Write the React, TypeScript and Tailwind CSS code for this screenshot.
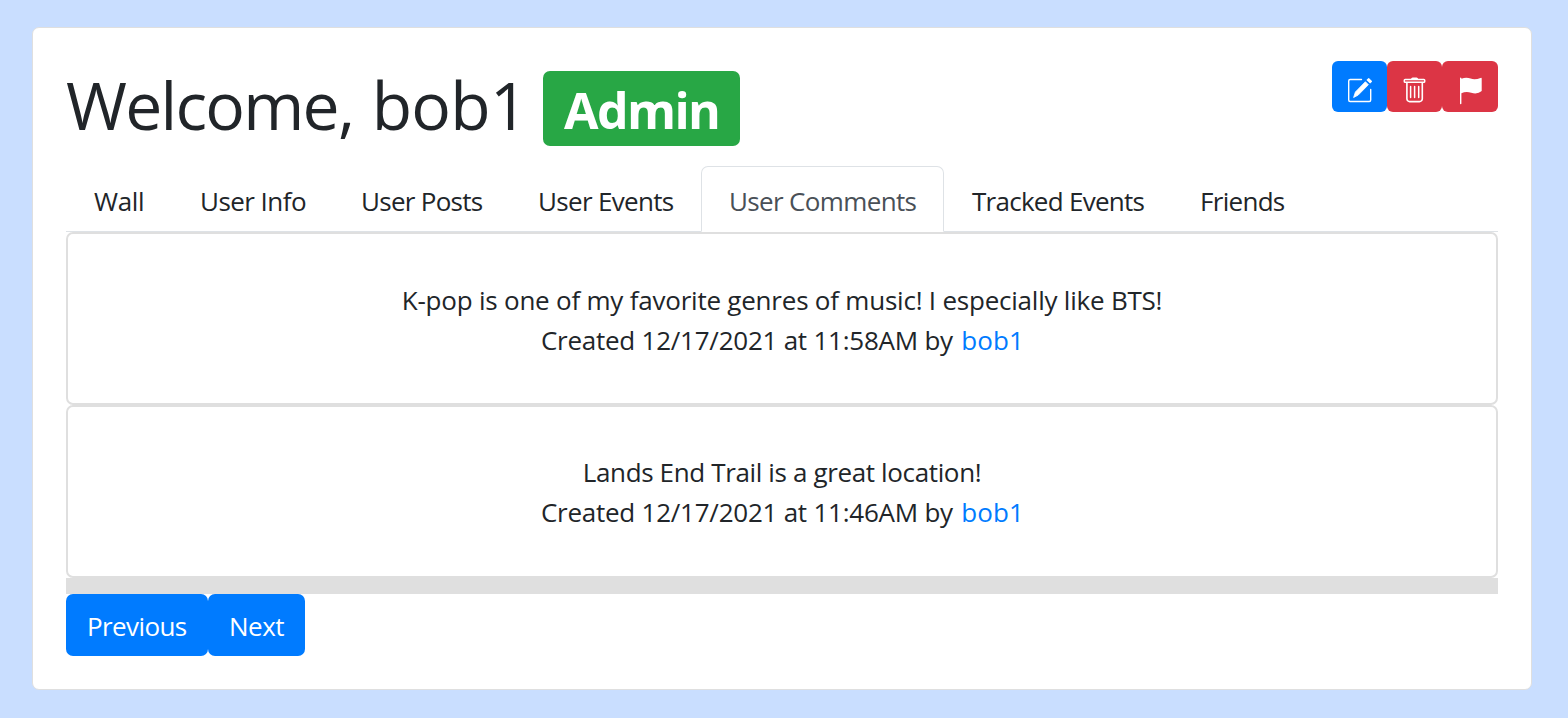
import type { ReactNode } from "react";

const tabs = [
  { label: "Wall", cls: "w-[106px] pl-[28px] tracking-[-0.3px]" },
  { label: "User Info", cls: "w-[161px] pl-[28px] tracking-[-0.55px]" },
  { label: "User Posts", cls: "w-[177px] pl-[28px] tracking-[-0.72px]" },
  { label: "User Events", cls: "w-[191px] pl-[28px] tracking-[-0.68px]" },
  { label: "User Comments", cls: "w-[243px] pl-[27px] tracking-[-0.64px]", active: true },
  { label: "Tracked Events", cls: "w-[228px] pl-[28px] tracking-[-0.73px]" },
  { label: "Friends", cls: "w-[140px] pl-[28px] tracking-[-0.7px]" },
];

function EditIcon() {
  return (
    <svg width="26" height="26" viewBox="0 0 26 26" fill="none">
      <path d="M14.5 2.5H3.2A1.5 1.5 0 0 0 1.7 4V23A1.5 1.5 0 0 0 3.2 24.5H22.2A1.5 1.5 0 0 0 23.7 23V12.5" stroke="white" strokeWidth="1.4" strokeLinecap="round" />
      <path d="M18.4 4.7L21.4 7.7L11.2 18.1L6.6 20.5L8.4 15Z" fill="white" stroke="white" strokeWidth="0.8" strokeLinejoin="round" />
      <path d="M21 1.4Q21.7.7 22.4 1.4L24.7 3.7Q25.4 4.4 24.7 5.1L23.1 6.6L19.4 3Z" fill="white" />
    </svg>
  );
}

function TrashIcon() {
  return (
    <svg width="26" height="26" viewBox="0 0 26 26" fill="none" stroke="white">
      <path d="M9 2.1Q9.3.4 10.6.4H14.6Q15.9.4 16.2 2.1Z" fill="white" stroke="none" />
      <rect x="2.3" y="2.4" width="20.4" height="2.9" rx="0.8" strokeWidth="1.5" />
      <path d="M4.9 5.5V21.8A2.8 2.8 0 0 0 7.7 24.6H17.5A2.8 2.8 0 0 0 20.3 21.8V5.5" strokeWidth="1.6" />
      <path d="M8.6 9.4V20.5M12.6 9.4V20.5M16.7 9.4V20.5" strokeWidth="1.5" strokeLinecap="round" />
    </svg>
  );
}

function FlagIcon() {
  return (
    <svg width="26" height="28" viewBox="0 0 26 28" fill="white">
      <path d="M2 1Q2 .6 2.7.6Q3.4.6 3.4 1V1.7Q8.3-.2 12.6 1.6Q17 3.2 22.6.9Q23.7.5 23.7 1.6V14.1Q19.6 17.6 13.2 15.8Q8 14.2 3.4 16.3V26.6Q3.4 27.2 2.7 27.2Q2 27.2 2 26.6Z" />
    </svg>
  );
}

function Comment({ children, time, pad }: { children: ReactNode; time: string; pad: string }) {
  return (
    <article className={`h-[173px] rounded-[7px] border-2 border-[#dfdfdf] text-center leading-[40px] ${pad}`}>
      {children}
      <p className="pl-px tracking-[-0.24px]">
        Created 12/17/2021 at {time} by <a href="#" className="ml-[2px] tracking-[0.1px] text-[#007bff]">bob1</a>
      </p>
    </article>
  );
}

export default function App() {
  return (
    <div className="h-[718px] overflow-hidden bg-[#c9deff] pt-[27px] pl-8 font-['Open_Sans','Noto_Sans',sans-serif] text-[26px] text-[#212529]">
      <main className="h-[663px] w-[1500px] rounded-[7px] border border-[#dfdfdf] bg-white px-[33px]">
        <header className="flex h-[138px] items-start justify-between">
          <div className="flex pt-[43px]">
            <h1 className="w-[477px] pt-px text-[66px] leading-[64px] tracking-[-1.75px] whitespace-nowrap">Welcome, <span className="ml-[3px] tracking-[-0.7px]">bob1</span></h1>
            <span className="h-[75px] w-[197px] rounded-[7px] bg-[#28a745] pt-[2px] pl-[21px] text-[50px] leading-[75px] font-bold tracking-[-1.6px] text-white">Admin</span>
          </div>
          <div className="flex pt-[33px]">
            <button aria-label="Edit" className="h-[51px] w-[55px] rounded-[6px] bg-[#007bff] pt-[7px] pl-[15px]"><EditIcon /></button>
            <button aria-label="Delete" className="h-[51px] w-[55px] rounded-[6px] bg-[#dc3545] pt-[7px] pl-[15px]"><TrashIcon /></button>
            <button aria-label="Flag" className="h-[51px] w-[56px] rounded-[6px] bg-[#dc3545] pt-[9px] pl-[16px]"><FlagIcon /></button>
          </div>
        </header>
        <nav className="flex h-[66px] border-b border-[#dee2e6] leading-[70px] whitespace-nowrap">
          {tabs.map((t) => (
            <a key={t.label} href="#" className={`${t.cls} h-[66px] shrink-0 ${t.active ? "rounded-t-[7px] border border-[#dee2e6] border-b-white bg-white text-[#495057] leading-[68px]" : ""}`}>{t.label}</a>
          ))}
        </nav>
        <section>
          <Comment time="11:58AM" pad="pt-[46px]"><p className="tracking-[-0.22px]">K-pop is one of my favorite genres of music! I especially like BTS!</p></Comment>
          <Comment time="11:46AM" pad="pt-[45px]"><p className="tracking-[-0.36px]">Lands End Trail is a great location!</p></Comment>
          <div className="h-4 bg-[#dfdfdf]" />
        </section>
        <div className="flex text-white">
          <button className="h-[62px] w-[142px] rounded-[7px] bg-[#007bff] pl-[21px] text-left leading-[64px] tracking-[-0.6px]">Previous</button>
          <button className="h-[62px] w-[97px] rounded-[7px] bg-[#007bff] pl-[21px] text-left leading-[64px] tracking-[-0.5px]">Next</button>
        </div>
      </main>
    </div>
  );
}
